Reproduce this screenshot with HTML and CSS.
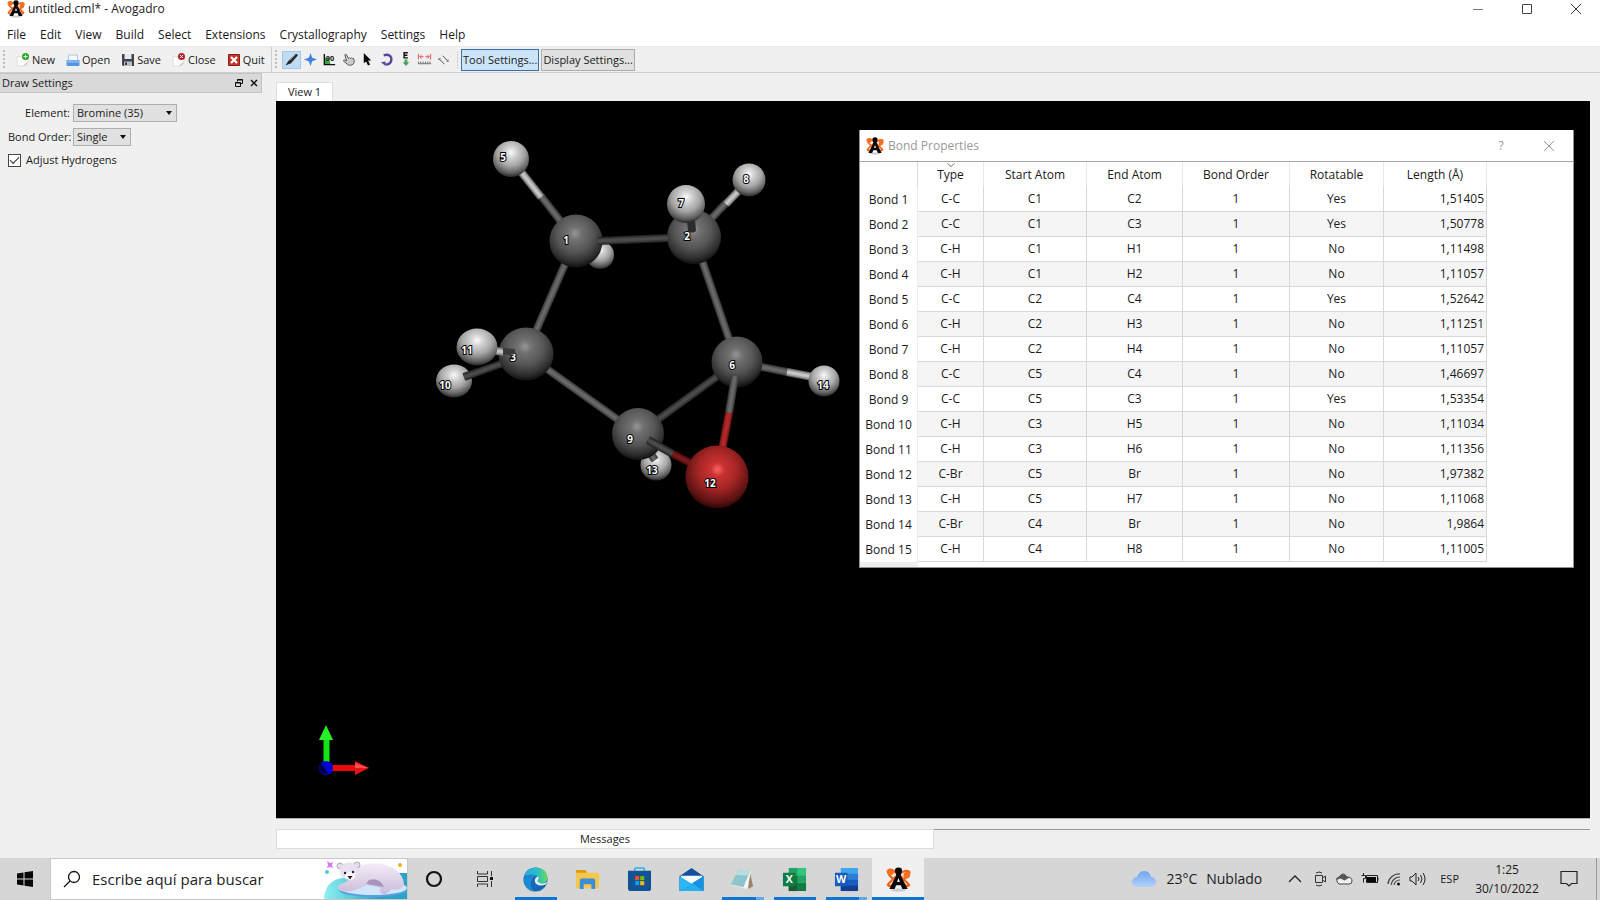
FILE: index.html
```html
<!DOCTYPE html>
<html lang="es">
<head>
<meta charset="utf-8">
<title>untitled.cml* - Avogadro</title>
<link rel="stylesheet" href="styles.css">
</head>
<body>
<svg class="defs" width="0" height="0" aria-hidden="true">
  <defs>
    <radialGradient id="carbon" cx="48%" cy="36%" r="62%"><stop offset="0" stop-color="#979797"/><stop offset=".2" stop-color="#717171"/><stop offset=".55" stop-color="#565656"/><stop offset=".85" stop-color="#303030"/><stop offset="1" stop-color="#151515"/></radialGradient>
    <radialGradient id="hydrogen" cx="50%" cy="32%" r="68%"><stop offset="0" stop-color="#fafafa"/><stop offset=".25" stop-color="#cfcfcf"/><stop offset=".55" stop-color="#a5a5a5"/><stop offset=".85" stop-color="#5c5c5c"/><stop offset="1" stop-color="#262626"/></radialGradient>
    <radialGradient id="bromine" cx="51%" cy="38%" r="62%"><stop offset="0" stop-color="#ff6464"/><stop offset=".18" stop-color="#c93232"/><stop offset=".5" stop-color="#a52525"/><stop offset=".85" stop-color="#5c1212"/><stop offset="1" stop-color="#280505"/></radialGradient>
    <linearGradient id="edge" x1="0" y1="0" x2="1" y2="0"><stop offset="0" stop-color="#2aa7e0"/><stop offset=".6" stop-color="#2bc0c0"/><stop offset="1" stop-color="#68e04e"/></linearGradient>
    <linearGradient id="cloud" x1="0" y1="0" x2="0" y2="1"><stop offset="0" stop-color="#6fa5f0"/><stop offset="1" stop-color="#b3d1fb"/></linearGradient>
    <linearGradient id="bear" x1="0" y1="0" x2="0" y2="1"><stop offset="0" stop-color="#f3edf8"/><stop offset="1" stop-color="#cbbbd9"/></linearGradient>
    <linearGradient id="ice" x1="0" y1="0" x2="1" y2="0"><stop offset="0" stop-color="#8df0f0"/><stop offset="1" stop-color="#1b9fc2"/></linearGradient>
    <symbol id="avogadro" viewBox="0 0 26 26">
      <ellipse cx="13" cy="24" rx="8" ry="1.600" fill="#bbb" opacity=".7"/>
      <g fill="none" stroke="#f2641c" stroke-width="2.400"><path d="M2 3.500q5-2 13 6t9 9q-1 3-8-1M24 4.500q-5-2-13 5t-9 9q1 3 8-1"/><path d="M2 3.500q-1 4 7 10M24 4.500q2 4-7 9"/></g>
      <path d="M11 8h4l7.500 15H17l-1.500-4h-5L9 23H3.500zM11.500 15.500h3L13 11.500z" fill="#080808" fill-rule="evenodd"/>
      <path d="M9.500 5q-1-4.500 3.500-4.500T16.500 5L15 9h-4z" fill="#080808"/>
      <circle cx="5" cy="5" r="3.400" fill="#f4701f"/><circle cx="21.500" cy="8.500" r="3.400" fill="#f4701f"/>
    </symbol>
    <symbol id="page" viewBox="0 0 14 14"><path d="M1 3.500h11V9q-1 4-5 4H1z" fill="#fcfcfc" stroke="#d5d8d2" stroke-width=".7"/><path d="M7 13q2-3 5-4-1 4-5 4" fill="#c9cec5"/></symbol>
  </defs>
</svg>

<header class="titlebar">
  <svg class="app-icon" viewBox="0 0 26 26"><use href="#avogadro"/></svg>
  <h1 class="title">untitled.cml* - Avogadro</h1>
  <div class="window-buttons">
    <button aria-label="Minimize"><svg width="12" height="12"><path d="M1 6.500h10" stroke="#777"/></svg></button>
    <button aria-label="Maximize"><svg width="12" height="12"><path d="M1.500 1.500h9v9h-9z" fill="none" stroke="#444"/></svg></button>
    <button aria-label="Close"><svg width="12" height="12"><path d="M1 1l10 10M11 1L1 11" stroke="#333"/></svg></button>
  </div>
</header>

<nav class="menubar">
  <button>File</button><button>Edit</button><button>View</button><button>Build</button><button>Select</button><button>Extensions</button><button>Crystallography</button><button>Settings</button><button>Help</button>
</nav>

<div class="toolbar">
  <div class="file-tools">
    <span class="grip"></span>
    <button><svg viewBox="0 0 14 14"><use href="#page"/><circle cx="9.500" cy="3.500" r="3.500" fill="#2ba32b"/><path d="M9.500 1.500v4M7.500 3.500h4" stroke="#d8ffd8"/></svg>New</button>
    <button><svg viewBox="0 0 14 14"><path d="M2.500 2h9v6h-9z" fill="#f5f8fc" stroke="#9bb4d6" stroke-width=".7"/><path d="M.5 7h13v5q0 1-1 1h-11q-1 0-1-1z" fill="#5595e4"/><path d="M1 7.500h12v2H1z" fill="#8fbdf3"/></svg>Open</button>
    <button><svg viewBox="0 0 14 14"><path d="M1 1h12v12H2l-1-1z" fill="#3e4249"/><path d="M3.500 1h7v5h-7z" fill="#e6e9ed"/><path d="M3 8.500h8V13H3z" fill="#b9bec5"/><path d="M4 9.500h2V12H4z" fill="#33373d"/></svg>Save</button>
    <button><svg viewBox="0 0 14 14"><use href="#page"/><circle cx="9.500" cy="3.500" r="3.500" fill="#b32128"/><path d="M8 2l3 3M11 2L8 5" stroke="#fff"/></svg>Close</button>
    <button><svg viewBox="0 0 14 14"><path d="M1.500 1.500h11v11h-11z" fill="#c5352c" stroke="#8e1c18"/><path d="M4 4l6 6M10 4l-6 6" stroke="#fff" stroke-width="2.200"/></svg>Quit</button>
  </div>
  <div class="draw-tools">
    <span class="grip"></span>
    <button class="tool selected" aria-label="Draw"><svg viewBox="0 0 16 16"><path d="M1.500 14.500l3-5L12 2.500q3-1 2.500 1.500L7.500 12z" fill="#26282a"/><path d="M6 9l6-6" stroke="#8f979c"/></svg></button>
    <button class="tool" aria-label="Navigate"><svg viewBox="0 0 16 16"><path d="M8 1l1.800 5.200L15 8 9.800 9.800 8 15 6.200 9.800 1 8l5.200-1.800z" fill="#3d83e6"/></svg></button>
    <button class="tool" aria-label="Bond centric"><svg viewBox="0 0 16 16"><path d="M3 6q6 1 6 7H3z" fill="#37a84a"/><path d="M2.500 2v11.500H14" fill="none" stroke="#111" stroke-width="1.500"/><text x="4" y="10" font-size="8">90</text></svg></button>
    <button class="tool" aria-label="Manipulate"><svg viewBox="0 0 16 16"><path d="M4 3q1-1 2 0l2 4 1-1 1 1 1-1 1 1 1-.5 1 2v3q-1 2-3 2.500H8L3 10q-1-2 1-1.500l2 1z" fill="#ccc" stroke="#555"/></svg></button>
    <button class="tool" aria-label="Select"><svg viewBox="0 0 16 16"><path d="M4 1l8 8H8.700l2 4.500-2.200 1L6.500 10 4 12z" fill="#080808"/></svg></button>
    <button class="tool" aria-label="Auto rotate"><svg viewBox="0 0 16 16"><path d="M5 3.500q6-2 8 2.500 1 7-6 7.500" fill="none" stroke="#5b449b" stroke-width="2.600"/><path d="M7 10v5l-5-4z" fill="#5b449b"/></svg></button>
    <button class="tool" aria-label="Auto optimize"><svg viewBox="0 0 16 16"><path d="M10.500 .8H6.500v5.500h4M6.500 3.500h3.500" fill="none" stroke="#111" stroke-width="1.500"/><path d="M7 8h3v3h2l-3.500 4L5 11h2z" fill="#49a35a"/></svg></button>
    <button class="tool" aria-label="Measure"><svg viewBox="0 0 16 16"><path d="M1.500 2v6M14.500 2v6M3 5h4M9 5h4M5 3L3 5l2 2M11 3l2 2-2 2" fill="none" stroke="#e05252"/><path d="M1 12.500h14" stroke="#666"/><path d="M1 11h14" stroke="#666" stroke-width="2" stroke-dasharray="1 1.500"/></svg></button>
    <button class="tool" aria-label="Align"><svg viewBox="0 0 16 16"><path d="M3 7l6 6M7 4l6 6" stroke="#444"/><path d="M3 9V7h2M11 10h2V8" fill="none" stroke="#888"/></svg></button>
    <span class="divider"></span>
    <button class="setting pressed">Tool Settings...</button>
    <button class="setting">Display Settings...</button>
  </div>
</div>

<main class="workspace">
  <aside class="dock">
    <div class="dock-title">
      <h2>Draw Settings</h2>
      <button aria-label="Float"><svg width="8" height="8"><path d="M2.500 2.500v-2h5v4h-2M.5 3.500h5v4h-5z" fill="none" stroke="#111"/><path d="M2 1h6M0 4h6" stroke="#111"/></svg></button>
      <button aria-label="Close dock"><svg width="8" height="8"><path d="M1 1l6 6M7 1L1 7" stroke="#111" stroke-width="1.400"/></svg></button>
    </div>
    <form class="settings">
      <label for="element">Element:</label>
      <span class="picker element"><select id="element"><option>Bromine (35)</option></select></span>
      <label for="order">Bond Order:</label>
      <span class="picker order"><select id="order"><option>Single</option></select></span>
      <div class="check"><input type="checkbox" id="adjust" checked><label for="adjust">Adjust Hydrogens</label></div>
    </form>
  </aside>

  <section class="views">
    <button class="view-tab">View 1</button>
    <div class="canvas">
      <svg class="molecule" viewBox="276 101 1314 716" preserveAspectRatio="xMinYMin meet">
        <circle cx="600" cy="255" r="14" fill="url(#hydrogen)"/>
        <circle cx="656" cy="465" r="15.500" fill="url(#hydrogen)"/>
        <g class="bond"><path d="M648 450l7 10"/><path d="M648 450l7 10"/><path d="M648 450l7 10"/></g>
        <g class="bond"><path d="M575 241L526 354"/><path d="M575 241L526 354"/><path d="M575 241L526 354"/></g>
        <g class="bond"><path d="M694 237L737 362"/><path d="M694 237L737 362"/><path d="M694 237L737 362"/></g>
        <g class="bond"><path d="M526 354L638 434"/><path d="M526 354L638 434"/><path d="M526 354L638 434"/></g>
        <g class="bond dim"><path d="M638 434L737 362"/><path d="M638 434L737 362"/><path d="M638 434L737 362"/></g>
        <g class="bond"><path d="M541 196L576 241"/><path d="M541 196L576 241"/><path d="M541 196L576 241"/></g>
        <g class="bond white"><path d="M511 159L541 197"/><path d="M511 159L541 197"/><path d="M511 159L541 197"/></g>
        <g class="bond"><path d="M726 203L694 237"/><path d="M726 203L694 237"/><path d="M726 203L694 237"/></g>
        <g class="bond white"><path d="M749 180L726 204"/><path d="M749 180L726 204"/><path d="M749 180L726 204"/></g>
        <g class="bond"><path d="M737 362L787 372"/><path d="M737 362L787 372"/><path d="M737 362L787 372"/></g>
        <g class="bond white"><path d="M787 372L824 379"/><path d="M787 372L824 379"/><path d="M787 372L824 379"/></g>
        <circle cx="511" cy="159" r="18" fill="url(#hydrogen)"/>
        <circle cx="749" cy="180" r="16.500" fill="url(#hydrogen)"/>
        <circle cx="824" cy="381" r="15.500" fill="url(#hydrogen)"/>
        <circle cx="576" cy="241" r="26.500" fill="url(#carbon)"/>
        <circle cx="694" cy="237" r="27" fill="url(#carbon)"/>
        <g class="bond dim"><path d="M598 241L668 238"/><path d="M598 241L668 238"/><path d="M598 241L668 238"/></g>
        <ellipse cx="454" cy="381" rx="18" ry="16.500" fill="url(#hydrogen)"/>
        <g class="bond dim"><path d="M464 377L520 357"/><path d="M464 377L520 357"/><path d="M464 377L520 357"/></g>
        <ellipse cx="526" cy="354" rx="27.500" ry="26.500" fill="url(#carbon)"/>
        <g class="atom-labels"><text x="513" y="361">3</text></g>
        <g class="bond white"><path d="M490 350L504 352"/><path d="M490 350L504 352"/><path d="M490 350L504 352"/></g>
        <path d="M503 348l12 1v5l-12 1z" fill="#3a3a3a"/>
        <ellipse cx="477" cy="347" rx="20.500" ry="18.500" fill="url(#hydrogen)"/>
        <circle cx="737" cy="362" r="25.500" fill="url(#carbon)"/>
        <circle cx="638" cy="434" r="26" fill="url(#carbon)"/>
        <path d="M687 221l8-1 1 11q-4 3-8 0z" fill="#2b2b2b"/>
        <circle cx="686" cy="204" r="19" fill="url(#hydrogen)"/>
        <g class="bond"><path d="M735 376L729 413"/><path d="M735 376L729 413"/><path d="M735 376L729 413"/></g>
        <g class="bond red"><path d="M729 413L722 450"/><path d="M729 413L722 450"/><path d="M729 413L722 450"/></g>
        <g class="bond dim"><path d="M648 440L673 454"/><path d="M648 440L673 454"/><path d="M648 440L673 454"/></g>
        <g class="bond red deep"><path d="M673 454L700 468"/><path d="M673 454L700 468"/><path d="M673 454L700 468"/></g>
        <circle cx="717" cy="477" r="31.500" fill="url(#bromine)"/>
        <g class="atom-labels">
          <text x="503" y="161">5</text><text x="566" y="244">1</text><text x="681" y="207">7</text><text x="746" y="183">8</text><text x="687" y="240">2</text><text x="467" y="354">11</text><text x="445" y="389">10</text><text x="630" y="443">9</text><text x="732" y="369">6</text><text x="823" y="389">14</text><text x="652" y="474">13</text><text x="710" y="487">12</text>
        </g>
        <path d="M326.500 738v24" stroke="#14e414" stroke-width="6"/><path d="M326 725l7 15h-14z" fill="#25f025"/>
        <path d="M332 768h24" stroke="#ee0808" stroke-width="6"/><path d="M355 761l14 7-14 7z" fill="#e31616"/><path d="M355 763l14 5h-14z" fill="#ff4b4b"/>
        <circle cx="326" cy="768" r="7" fill="#0000d8"/><path d="M321 763l7 11a7 7 0 0 1-7-11z" fill="#000040"/>
      </svg>

      <section class="dialog" role="dialog" aria-labelledby="dialog-title">
        <header class="dialog-title">
          <svg class="app-icon" viewBox="0 0 26 26"><use href="#avogadro"/></svg>
          <h2 id="dialog-title">Bond Properties</h2>
          <button>?</button>
          <button aria-label="Close dialog"><svg width="12" height="12"><path d="M1 1l10 10M11 1L1 11" stroke="#999"/></svg></button>
        </header>
        <table class="bonds">
          <colgroup><col class="c-name"><col class="c-type"><col class="c-start"><col class="c-end"><col class="c-order"><col class="c-rot"><col class="c-len"></colgroup>
          <thead><tr><td></td><th class="sorted">Type<svg width="8" height="4"><path d="M.5.5L4 3.500 7.500.5" fill="none" stroke="#777"/></svg></th><th>Start Atom</th><th>End Atom</th><th>Bond Order</th><th>Rotatable</th><th>Length (Å)</th></tr></thead>
          <tbody>
            <tr><th>Bond 1</th><td>C-C</td><td>C1</td><td>C2</td><td>1</td><td>Yes</td><td>1,51405</td></tr>
            <tr><th>Bond 2</th><td>C-C</td><td>C1</td><td>C3</td><td>1</td><td>Yes</td><td>1,50778</td></tr>
            <tr><th>Bond 3</th><td>C-H</td><td>C1</td><td>H1</td><td>1</td><td>No</td><td>1,11498</td></tr>
            <tr><th>Bond 4</th><td>C-H</td><td>C1</td><td>H2</td><td>1</td><td>No</td><td>1,11057</td></tr>
            <tr><th>Bond 5</th><td>C-C</td><td>C2</td><td>C4</td><td>1</td><td>Yes</td><td>1,52642</td></tr>
            <tr><th>Bond 6</th><td>C-H</td><td>C2</td><td>H3</td><td>1</td><td>No</td><td>1,11251</td></tr>
            <tr><th>Bond 7</th><td>C-H</td><td>C2</td><td>H4</td><td>1</td><td>No</td><td>1,11057</td></tr>
            <tr><th>Bond 8</th><td>C-C</td><td>C5</td><td>C4</td><td>1</td><td>No</td><td>1,46697</td></tr>
            <tr><th>Bond 9</th><td>C-C</td><td>C5</td><td>C3</td><td>1</td><td>Yes</td><td>1,53354</td></tr>
            <tr><th>Bond 10</th><td>C-H</td><td>C3</td><td>H5</td><td>1</td><td>No</td><td>1,11034</td></tr>
            <tr><th>Bond 11</th><td>C-H</td><td>C3</td><td>H6</td><td>1</td><td>No</td><td>1,11356</td></tr>
            <tr><th>Bond 12</th><td>C-Br</td><td>C5</td><td>Br</td><td>1</td><td>No</td><td>1,97382</td></tr>
            <tr><th>Bond 13</th><td>C-H</td><td>C5</td><td>H7</td><td>1</td><td>No</td><td>1,11068</td></tr>
            <tr><th>Bond 14</th><td>C-Br</td><td>C4</td><td>Br</td><td>1</td><td>No</td><td>1,9864</td></tr>
            <tr><th>Bond 15</th><td>C-H</td><td>C4</td><td>H8</td><td>1</td><td>No</td><td>1,11005</td></tr>
          </tbody>
        </table>
        <div class="table-foot"></div>
      </section>
    </div>
    <div class="messages"><button>Messages</button><span></span></div>
  </section>
</main>

<footer class="taskbar">
  <button class="start" aria-label="Inicio"><svg width="18" height="18"><path d="M1 3.500l6.500-1V8.500H1zM8.500 2.300L17 1v7.500H8.500zM1 9.500h6.500v6L1 14.500zM8.500 9.500H17V17l-8.500-1.300z" fill="#080808"/></svg></button>
  <label class="search">
    <svg width="18" height="18"><circle cx="11" cy="7" r="5.500" fill="none" stroke="#111" stroke-width="1.300"/><path d="M7 11l-6 6" stroke="#111" stroke-width="1.300"/></svg>
    <input type="text" placeholder="Escribe aquí para buscar" aria-label="Buscar">
    <svg class="bear" width="84" height="40" viewBox="0 0 84 40">
      <path d="M60 14h24v26H50z" fill="#2aa5c8"/><path d="M1 40Q2 18 28 18q30 0 34 22z" fill="url(#ice)"/>
      <ellipse cx="50" cy="31" rx="34" ry="7" fill="#5b9fe0"/><ellipse cx="50" cy="29" rx="34" ry="7" fill="#cfe6fb"/>
      <path d="M30 10Q46 1 64 6q16 6 17 20-4 6-12 4l-6 5q-9 0-5-6l-14-3-12 5q-12 4-17-1-1-5 6-6l6-4z" fill="url(#bear)"/><path d="M46 21q10-3 15 7l-18-3z" fill="#a795bc"/>
      <circle cx="17" cy="7" r="3" fill="#e6dcee" stroke="#8c7b9b" stroke-width=".6"/><circle cx="34" cy="6" r="3" fill="#e6dcee" stroke="#8c7b9b" stroke-width=".6"/>
      <ellipse cx="26" cy="12" rx="9.500" ry="8.500" fill="#e9e0f0"/><ellipse cx="27" cy="17" rx="5" ry="4" fill="#fffaff"/><circle cx="22" cy="14" r="1.200" fill="#222"/><circle cx="30" cy="13" r="1.200" fill="#222"/><path d="M24.500 17h5l-2.500 3.500z" fill="#222"/>
      <path d="M4 2l3 2 3-1-1 3 1 3-3-1-3 1 1-3z" fill="#d77bf0"/><circle cx="4" cy="13" r="2" fill="#4cc8dc"/><circle cx="77" cy="6" r="2" fill="#fba918"/>
    </svg>
  </label>
  <button class="sys" aria-label="Cortana"><svg width="18" height="18"><circle cx="9" cy="9" r="7" fill="none" stroke="#111" stroke-width="2.200"/></svg></button>
  <button class="sys" aria-label="Vista de tareas"><svg width="18" height="18"><path d="M1.500 1v3h10V1M1.500 17v-3h10v3M1.500 6.500h10v5h-10zM15.500 1v5M15.500 11v6" fill="none" stroke="#333"/><path d="M14 7h3v3h-3z" fill="#111"/></svg></button>
  <div class="apps">
    <button class="running" aria-label="Edge"><svg viewBox="0 0 26 26"><circle cx="13" cy="13" r="12.500" fill="#1567b8"/><path d="M.7 11Q3 .5 13 .5q12 1 12.500 11-.5 5-6 5.500-6 0-3.500-4Q16 8 10 8 3 8 .7 11z" fill="url(#edge)"/><path d="M10 8Q1 9 .7 14 2 24 12 25.400 6 20 9 13q2-4 6-3-1.500-2-5-2z" fill="#1e8ad3"/><path d="M15.500 10q-5 2-2.500 7 4 4 11 1l1-3q-3 3-6.500 2-5-1-2.500-4.500 1-1.500-.5-2.500z" fill="#e8eef2"/></svg></button>
    <button aria-label="Explorador"><svg viewBox="0 0 26 26"><path d="M1 3h10l2 3h12v16H1z" fill="#f7c64f"/><path d="M1 3h10l1 3H1z" fill="#dc9b16"/><path d="M5 14q0-2 2-2h12q2 0 2 2v9h-4v-5H9v5H5z" fill="#3a8dd6"/></svg></button>
    <button aria-label="Store"><svg viewBox="0 0 26 26"><path d="M8 5V2q0-1 1-1h8q1 0 1 1v3" fill="none" stroke="#26b1ef" stroke-width="1.600"/><path d="M1 4h24v18q0 3-3 3H4q-3 0-3-3z" fill="#135293"/><path d="M8.500 9.500h4.200v4.200H8.500z" fill="#f25022"/><path d="M13.700 9.500h4.200v4.200h-4.200z" fill="#7fba00"/><path d="M8.500 14.700h4.200v4.200H8.500z" fill="#00a4ef"/><path d="M13.700 14.700h4.200v4.200h-4.200z" fill="#ffb900"/></svg></button>
    <button aria-label="Correo"><svg viewBox="0 0 26 26"><path d="M.5 9.500L13 1l12.500 8.500V25H.5z" fill="#12509b"/><path d="M2 9h22v2l-11 7L2 11z" fill="#f6f9fc"/><path d="M.5 9.500L14 18 .5 25z" fill="#2eb5f4"/><path d="M25.500 9.500V25H.5z" fill="#25aef0"/><path d="M25.500 25L14 17l11.500-7.500z" fill="#1b8fe0"/></svg></button>
    <button class="running multi" aria-label="Bloc de notas"><svg viewBox="0 0 26 26"><path d="M20 2l4 18-5 3z" fill="#9b8465"/><path d="M9 2l13 2-4 19-15-4z" fill="#f4f5f5"/><path d="M9 2l12 2-7 17L1 18z" fill="#8cc5cd"/><path d="M9 2l12 2-2 5-13-1z" fill="#b8dce0"/></svg></button>
    <button class="running" aria-label="Excel"><svg viewBox="0 0 26 26"><path d="M7 1h18v24H7z" fill="#21a366"/><path d="M16 1h9v8h-9z" fill="#33c481"/><path d="M7 9h9v8H7zM16 17h9v8h-9z" fill="#107c41"/><path d="M7 17h9v8H7z" fill="#185c37"/><path d="M1 6h13v14H1z" fill="#107c41"/><text x="4" y="17">X</text></svg></button>
    <button class="running multi" aria-label="Word"><svg viewBox="0 0 26 26"><path d="M7 1h18v24H7z" fill="#41a5ee"/><path d="M7 7h18v6H7z" fill="#2b7cd3"/><path d="M7 13h18v6H7z" fill="#185abd"/><path d="M7 19h18v6H7z" fill="#103f91"/><path d="M1 6h13v14H1z" fill="#185abd"/><text x="2" y="17">W</text></svg></button>
    <button class="running active" aria-label="Avogadro"><svg viewBox="0 0 26 26"><use href="#avogadro"/></svg></button>
  </div>
  <div class="tray">
    <button class="weather"><svg width="26" height="18"><path d="M6 17a5 5 0 0 1 0-10Q8 1 13 1q6 0 7 6a5 5 0 0 1 0 10z" fill="url(#cloud)"/></svg><span>23°C</span><span>Nublado</span></button>
    <button class="more" aria-label="Mostrar iconos ocultos"><svg width="14" height="16"><path d="M1 11l6-6 6 6" fill="none" stroke="#222" stroke-width="1.300"/></svg></button>
    <button aria-label="Reunirse"><svg width="14" height="16"><path d="M2.500 4.500h7v7h-7zM9.500 7l3-2v6l-3-2M3 2q3-2 6 0M3 14q3 2 6 0" fill="none" stroke="#333"/></svg></button>
    <button aria-label="OneDrive"><svg width="18" height="16"><path d="M4 13a4 4 0 0 1 0-7q4-6 8 0 5 0 5 4 0 3-3 3z" fill="#f0f0f0" stroke="#444"/><path d="M1 9q0-3 3.500-3.500 3.500-4.500 8 .5l2 .5-5 3-4-2z" fill="#555"/></svg></button>
    <button aria-label="Batería"><svg width="18" height="16"><path d="M5.500 4.500h11v7h-11z" fill="none" stroke="#222"/><path d="M6 6h9v5H6z" fill="#080808"/><path d="M17 6.500v3M2.500 2v3M.5 4.500h4v3h-2v4" fill="none" stroke="#222"/></svg></button>
    <button aria-label="Red"><svg width="14" height="16"><path d="M1 13A11 11 0 0 1 13 3M4 14a9 9 0 0 1 9-8M7 14a6 6 0 0 1 6-5" fill="none" stroke="#444" stroke-width="1.200"/><circle cx="11.500" cy="13" r="1.500" fill="#111"/></svg></button>
    <button aria-label="Volumen"><svg width="18" height="16"><path d="M1 6h2l4-4v12l-4-4H1zM9 6q2 2 0 4M11.500 4q3 4 0 8M14 2q4 6 0 12" fill="none" stroke="#222"/></svg></button>
    <button class="lang">ESP</button>
    <button class="clock"><span>1:25</span><span>30/10/2022</span></button>
    <button class="notice" aria-label="Notificaciones"><svg width="18" height="18"><path d="M1 1.500h16v12h-5.500L9 16l-2.500-2.500H1z" fill="none" stroke="#222" stroke-width="1.200"/></svg></button>
  </div>
</footer>
</body>
</html>
```
FILE: styles.css
```css
* { box-sizing: border-box; }
body {
  margin: 0;
  min-height: 100vh;
  display: flex;
  flex-direction: column;
  background: #f0f0f0;
  color: #1a1a1a;
  font-family: "Open Sans", "Noto Sans", sans-serif;
  font-size: 12px;
  line-height: 16px;
}
button, input, select {
  font: inherit;
  color: inherit;
  background: none;
  border: 0;
  padding: 0;
  margin: 0;
}
button svg { display: block; }
h1, h2 { margin: 0; font: inherit; }
.defs { position: absolute; }
.app-icon { width: 18px; height: 18px; flex: none; }

.titlebar { display: flex; align-items: center; gap: 3px; height: 18px; padding-left: 7px; background: #fff; }
.title { flex: 1; }
.window-buttons { display: flex; }
.window-buttons button { width: 49px; display: flex; justify-content: center; }

.menubar { display: flex; gap: 14px; height: 28px; padding: 5px 7px 0; align-items: center; background: #fff; font-size: 12px; }

.toolbar { display: flex; height: 27px; border-top: 1px solid #e8e8e8; border-bottom: 1px solid #cfcfcf; font-size: 11px; }
.file-tools { display: flex; align-items: center; gap: 11px; width: 272px; padding-left: 3px; border-right: 1px solid #cfcfcf; }
.file-tools button { display: flex; align-items: center; gap: 2px; }
.file-tools svg { width: 14px; height: 14px; }
.grip { width: 2px; height: 20px; flex: none; background: repeating-linear-gradient(#bdbdbd 0 2px, transparent 2px 4px); }
.draw-tools { display: flex; align-items: center; padding-left: 3px; }
.draw-tools .grip { margin-right: 5px; }
.tool { width: 19px; height: 18px; display: flex; align-items: center; justify-content: center; }
.tool svg { width: 15px; height: 15px; }
.tool text { font-family: "Liberation Sans", sans-serif; font-weight: bold; }
.tool.selected { background: #c0dcf3; outline: 1px solid #9fcaf0; outline-offset: -1px; }
.divider { width: 1px; height: 18px; margin: 0 3px 0 4px; background: #d8d8d8; }
.setting { height: 22px; padding: 0 1px; background: #e1e1e1; border: 1px solid #adadad; }
.setting + .setting { margin-left: 2px; }
.setting.pressed { background: #cce4f7; border-color: #3a6ea5; }

.workspace { flex: 1; display: flex; }
.dock { width: 262px; flex: none; font-size: 11px; }
.dock-title { display: flex; align-items: center; gap: 7px; height: 20px; padding: 0 3px 0 2px; background: #d9d9d9; border: 1px solid #c4c4c4; border-left: 0; }
.dock-title h2 { flex: 1; }
.settings { display: grid; grid-template-columns: 62px 1fr; column-gap: 3px; row-gap: 6px; padding: 11px 8px; align-items: center; }
.settings > label { text-align: right; white-space: nowrap; }
.picker { position: relative; display: block; height: 18px; }
.picker.element { width: 104px; }
.picker.order { width: 58px; }
.picker select { appearance: none; width: 100%; height: 18px; padding-left: 3px; background: #e1e1e1; border: 1px solid #adadad; }
.picker::after { content: ""; position: absolute; right: 5px; top: 7px; border: 3px solid transparent; border-top: 4px solid #111; border-bottom: 0; }
.check { grid-column: 1 / -1; display: flex; align-items: center; gap: 5px; }
.check input { appearance: none; width: 13px; height: 13px; background: #fff; border: 1px solid #444; display: grid; place-items: center; }
.check input:checked::after { content: ""; width: 8px; height: 4px; border: solid #333; border-width: 0 0 1px 1px; transform: rotate(-45deg) translate(1px, -1px); }

.views { flex: 1; display: flex; flex-direction: column; align-items: flex-start; padding: 9px 10px 9px 14px; }
.view-tab { height: 19px; width: 57px; background: #fff; border: 1px solid #dcdcdc; border-bottom: 0; font-size: 11px; }
.canvas { position: relative; align-self: stretch; flex: 1; min-height: 580px; background: #000; border-bottom: 1px solid #b0b0b0; overflow: hidden; }
.molecule { position: absolute; left: 0; top: 0; width: 100%; height: 100%; }
.bond path { fill: none; stroke: #343434; stroke-width: 8px; }
.bond path:nth-child(2) { stroke: #535353; stroke-width: 6px; }
.bond path:nth-child(3) { stroke: #686868; stroke-width: 3px; }
.bond.dim path { stroke: #222; }
.bond.dim path:nth-child(2) { stroke: #393939; }
.bond.dim path:nth-child(3) { stroke: #4b4b4b; }
.bond.white path { stroke: #666; }
.bond.white path:nth-child(2) { stroke: #9d9d9d; }
.bond.white path:nth-child(3) { stroke: #c6c6c6; }
.bond.red path { stroke: #641313; }
.bond.red path:nth-child(2) { stroke: #992121; }
.bond.red path:nth-child(3) { stroke: #b12828; }
.bond.deep path { stroke: #400a0a; }
.bond.deep path:nth-child(2) { stroke: #621313; }
.bond.deep path:nth-child(3) { stroke: #791919; }
.atom-labels { font-family: "Noto Sans", sans-serif; font-size: 10px; font-weight: bold; text-anchor: middle; fill: #fff; stroke: #000; stroke-width: 2px; paint-order: stroke; }

.dialog { position: absolute; top: 29px; right: 16px; width: 715px; background: #fff; border: 1px solid #8d9196; border-top: 0; font-size: 13px; }
.dialog-title { display: flex; align-items: center; height: 32px; padding-left: 6px; gap: 4px; border-bottom: 1px solid #a5a5a5; color: #999; font-size: 12px; }
.dialog-title h2 { flex: 1; }
.dialog-title button { width: 44px; display: flex; justify-content: center; }
.dialog-title button:last-child { margin-right: 2px; }
.bonds { table-layout: fixed; width: 627px; border-collapse: separate; border-spacing: 0; font-size: 12px; line-height: 16px; }
.c-name { width: 58px; }
.c-type { width: 66px; }
.c-start { width: 103px; }
.c-end { width: 96px; }
.c-order { width: 107px; }
.c-rot { width: 94px; }
.c-len { width: 103px; }
.bonds th, .bonds td { height: 25px; padding: 0; text-align: center; font-weight: normal; border-right: 1px solid #d8d8d8; }
.bonds thead th { border-color: #e8e8e8; }
.bonds tbody td { border-bottom: 1px solid #d8d8d8; padding-bottom: 1px; }
.bonds tbody th { padding-top: 1px; white-space: nowrap; border-color: #ececec; }
.bonds tbody tr:nth-child(even) td { background: #f5f5f5; }
.bonds tbody td:last-child { text-align: right; padding-right: 2px; }
.sorted { position: relative; }
.sorted svg { position: absolute; top: 1px; left: 50%; margin-left: -4px; }
.table-foot { width: 58px; height: 5px; background: #eee; }

.messages { display: flex; align-self: stretch; margin-top: 10px; height: 20px; }
.messages button { flex: 1; background: #fff; border: 1px solid #dcdcdc; font-size: 11px; }
.messages span { flex: 1; border-top: 1px solid #999; }

.taskbar { display: flex; align-items: stretch; height: 42px; background: #d6d6d6; }
.taskbar button { display: flex; align-items: center; justify-content: center; }
.start { width: 50px; }
.search { display: flex; align-items: center; width: 358px; padding-left: 12px; gap: 11px; background: #fff; border: 1px solid #c8c8c8; }
.search input { flex: 1; min-width: 0; outline: 0; font-size: 15px; line-height: 20px; }
.search input::placeholder { color: #222; opacity: 1; }
.bear { flex: none; }
.sys { width: 51px; }
.apps { display: flex; width: 414px; }
.apps button { flex: 1; position: relative; }
.apps svg { width: 25px; height: 25px; }
.apps text { font-family: "Open Sans", sans-serif; font-size: 11px; font-weight: bold; fill: #fff; }
.running::after { content: ""; position: absolute; left: 5px; right: 5px; bottom: 0; height: 3px; background: #0c75d6; }
.running.multi::after { background: linear-gradient(90deg, #0c75d6 80%, #62a9e8 80%); }
.active { background: #f0f0f0; }
.running.active::after { left: 0; right: 0; }
.tray { display: flex; margin-left: auto; gap: 8px; align-items: stretch; padding-right: 3px; }
.tray .weather { gap: 9px; font-size: 14px; margin-right: 18px; }
.more { margin-right: 3px; }
.lang { margin-left: 5px; font-size: 11px; }
.tray .clock { flex-direction: column; width: 64px; margin-left: 8px; line-height: 19px; }
.notice { width: 50px; padding-right: 6px; border-right: 1px solid #999; }
```
